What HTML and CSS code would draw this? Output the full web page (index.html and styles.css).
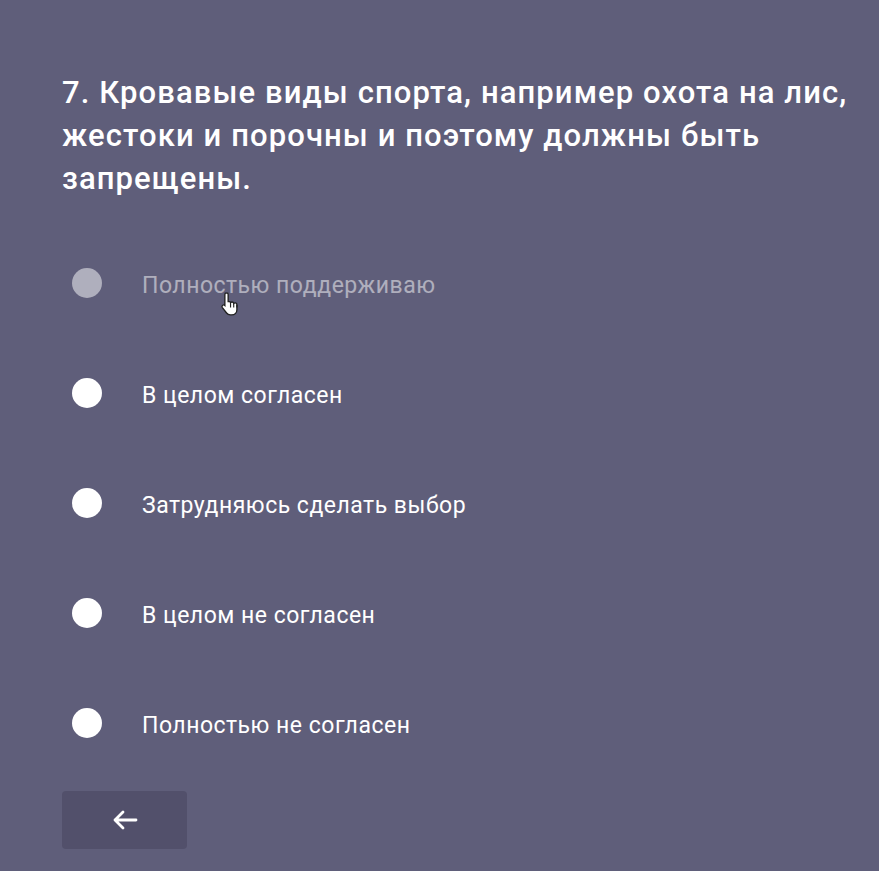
FILE: index.html
```html
<!DOCTYPE html>
<html lang="ru">
<head>
<meta charset="utf-8">
<link rel="stylesheet" href="styles.css">
</head>
<body>
<main class="quiz">
  <h1 class="question">7. Кровавые виды спорта, например охота на лис, жестоки и порочны и поэтому должны быть запрещены.</h1>
  <ul class="options">
    <li class="option option--faded"><span class="radio"></span><span class="label">Полностью поддерживаю</span>
      <svg class="cursor" width="22" height="25" viewBox="0 0 18 22"><path d="M5 1.5c.8 0 1.5.7 1.5 1.5v6.2l.6-.1c.8 0 1.4.5 1.5 1.2.3-.4.8-.6 1.3-.6.8 0 1.4.6 1.5 1.300.3-.3.7-.5 1.2-.5.9 0 1.6.7 1.6 1.6v4.4c0 2.6-2 4.5-4.6 4.5H8.4c-1.3 0-2.5-.6-3.3-1.6L1.4 14.6c-.5-.7-.4-1.6.3-2.1.6-.4 1.4-.3 1.9.2V3c0-.8.7-1.5 1.5-1.5z" fill="#fff" stroke="#222" stroke-width="1.2"/><path d="M8.6 10.5v4M11.4 11.3v3.2M14.2 12.3v2.2" stroke="#222" stroke-width="1"/></svg>
    </li>
    <li class="option"><span class="radio"></span><span class="label">В целом согласен</span></li>
    <li class="option"><span class="radio"></span><span class="label">Затрудняюсь сделать выбор</span></li>
    <li class="option"><span class="radio"></span><span class="label">В целом не согласен</span></li>
    <li class="option"><span class="radio"></span><span class="label">Полностью не согласен</span></li>
  </ul>
  <button class="back" type="button" aria-label="Назад">
    <svg width="26" height="20" viewBox="0 0 26 20"><path d="M24 10H3M11 2L3 10l8 8" fill="none" stroke="#fff" stroke-width="2.8" stroke-linecap="round" stroke-linejoin="round"/></svg>
  </button>
</main>
</body>
</html>
```

FILE: styles.css
```css
html, body {
  margin: 0;
  padding: 0;
  background: #5f5e7a;
}
body {
  font-family: Roboto, "Noto Sans", sans-serif;
  color: #fff;
  min-height: 871px;
}
.quiz {
  padding: 71px 0 0 62px;
}
.question {
  margin: 0;
  font-size: 31px;
  font-weight: 500;
  line-height: 43px;
  letter-spacing: 1.1px;
  max-width: 810px;
}
.options {
  list-style: none;
  margin: 28px 0 0 0;
  padding: 0;
}
.option {
  position: relative;
  display: flex;
  align-items: center;
  height: 110px;
}
.radio {
  width: 30px;
  height: 30px;
  border-radius: 50%;
  background: #fff;
  margin-left: 10px;
  flex: none;
}
.label {
  margin-left: 40px;
  padding-top: 5px;
  font-size: 23px;
  line-height: 30px;
  letter-spacing: 0.5px;
}
.option--faded .radio,
.option--faded .label {
  opacity: 0.5;
}
.cursor {
  position: absolute;
  left: 158px;
  top: 63px;
}
.back {
  margin-top: 13px;
  width: 125px;
  height: 58px;
  border: none;
  border-radius: 4px;
  background: #52506b;
  display: flex;
  align-items: center;
  justify-content: center;
  cursor: pointer;
  padding: 0;
}
```
